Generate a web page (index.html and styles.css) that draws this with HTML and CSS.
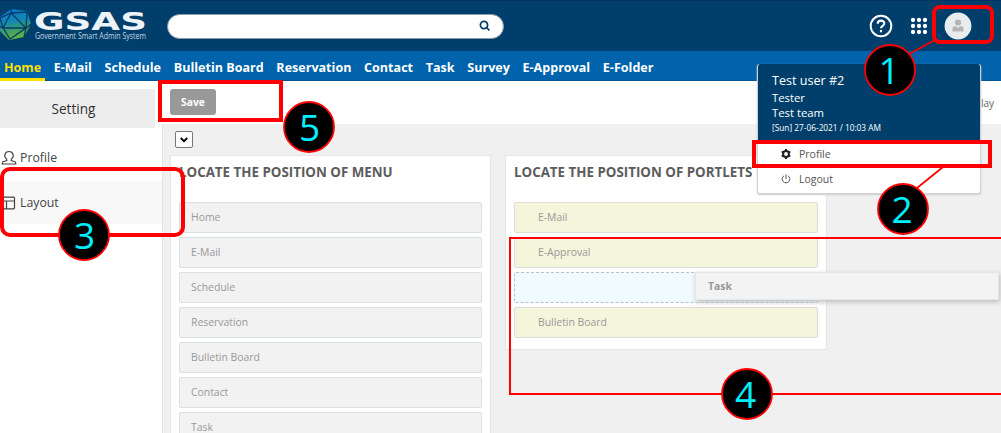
FILE: index.html
```html
<!DOCTYPE html>
<html lang="en">
<head>
<meta charset="utf-8">
<title>GSAS - Layout setting</title>
<link rel="stylesheet" href="styles.css">
</head>
<body>
<div class="app">
  <header class="topbar">
    <svg class="logo" width="150" height="50" viewBox="0 0 150 50">
      <defs>
        <linearGradient id="gem" x1="0.4" y1="0" x2="0.6" y2="1">
          <stop offset="0" stop-color="#0878d2"/><stop offset="0.4" stop-color="#1488b0"/><stop offset="0.65" stop-color="#3a9c6c"/><stop offset="1" stop-color="#6dbb35"/>
        </linearGradient>
      </defs>
      <path d="M11 8 27 10 31 23 24 36 9 39 -2 28 0 16Z" fill="url(#gem)"/>
      <path d="M11 12 26 27 3 27ZM11 12 27 11 26 27 31 23M11 12 0 17 3 27 10 38 26 27 24 36M3 27-2 25M11 12 11 8" fill="none" stroke="#063c65" stroke-width="1.3"/>
      <text class="logo-name" x="34" y="28.5" textLength="113" lengthAdjust="spacingAndGlyphs">GSAS</text>
      <text class="logo-sub" x="35" y="38" textLength="111" lengthAdjust="spacingAndGlyphs">Government Smart Admin System</text>
    </svg>
    <div class="search">
      <svg width="12" height="12" viewBox="0 0 12 12"><circle cx="5" cy="5" r="3.6"/><path d="M7.7 7.7 10.5 10.5"/></svg>
    </div>
    <div class="tools">
      <svg width="24" height="24" viewBox="0 0 24 24"><circle cx="12" cy="12" r="10.3" fill="none" stroke="#fff" stroke-width="2"/><path d="M8.7 9.7C8.9 5.5 15.4 5.8 15.3 9.5 15.2 11.8 12.1 11.8 12 14.2M12 15.9V18.2" fill="none" stroke="#fff" stroke-width="2.1"/></svg>
      <svg class="grid-icon" width="18" height="18" viewBox="0 0 18 18"><path d="M3 3h0M9 3h0M15 3h0M3 9h0M9 9h0M15 9h0M3 15h0M9 15h0M15 15h0" stroke="#fff" stroke-width="4.300" stroke-linecap="round"/></svg>
      <svg width="28" height="28" viewBox="0 0 28 28"><circle cx="14" cy="14" r="13.4" fill="#e9ecef"/><circle cx="14" cy="10.500" r="3.1" fill="#b5b5b5"/><path d="M8.5 19.5V16.5Q8.5 14 11.5 14L14 16 16.5 14Q19.5 14 19.5 16.5V19.5Z" fill="#b5b5b5"/></svg>
    </div>
  </header>
  <nav class="nav">
    <a class="active">Home</a><a>E-Mail</a><a>Schedule</a><a>Bulletin Board</a><a>Reservation</a><a>Contact</a><a>Task</a><a>Survey</a><a>E-Approval</a><a>E-Folder</a>
  </nav>
  <div class="body">
    <aside class="sidebar">
      <h2>Setting</h2>
      <a class="side-item">
        <svg width="16" height="16" viewBox="0 0 16 16"><path d="M5.8 9.2C2.2 7 3.6 1.5 8 1.5S13.8 7 10.2 9.2M5.8 9.2V10.5L2 11.7Q1.2 12.2 1.2 14H14.8Q14.8 12.2 14 11.7L10.2 10.5V9.2"/></svg>
        <span>Profile</span></a>
      <a class="side-item current">
        <svg width="16" height="16" viewBox="0 0 16 16"><path d="M-1 2.200H12.500Q13.500 2.200 13.500 3.200V12.800Q13.500 13.800 12.500 13.800H-1M0 6H13.5M5.5 6V13.8"/></svg>
        <span>Layout</span></a>
    </aside>
    <main class="main">
      <div class="toolbar"><button class="save">Save</button><span class="display">Display</span></div>
      <div class="workspace">
        <div class="select"><svg width="8" height="6" viewBox="0 0 8 6"><path d="M.8 1 4 4.2 7.2 1"/></svg></div>
        <div class="panels">
          <section class="panel menu-panel">
            <h3>LOCATE THE POSITION OF MENU</h3>
            <div class="list">
              <div class="item">Home</div><div class="item">E-Mail</div><div class="item">Schedule</div><div class="item">Reservation</div><div class="item">Bulletin Board</div><div class="item">Contact</div><div class="item">Task</div>
            </div>
          </section>
          <section class="panel portlets">
            <h3>LOCATE THE POSITION OF PORTLETS</h3>
            <div class="list">
              <div class="item">E-Mail</div><div class="item">E-Approval</div><div class="item drop"></div><div class="item">Bulletin Board</div>
            </div>
          </section>
        </div>
      </div>
    </main>
  </div>
  <div class="dragged">Task</div>
  <div class="popup">
    <div class="user"><p class="user-name">Test user #2</p><p>Tester</p><p>Test team</p><p class="time">[Sun] 27-06-2021 / 10:03 AM</p></div>
    <a class="pop-item">
      <svg width="10" height="10" viewBox="0 0 10 10"><circle cx="5" cy="5" r="2.9" fill="none" stroke="#222" stroke-width="2"/><path d="M5 0V2M5 8v2M.7 2.5l1.7 1M7.6 6.5l1.7 1M.7 7.5l1.7-1M7.6 3.5l1.7-1" stroke="#222" stroke-width="2"/></svg>
      <span>Profile</span></a>
    <a class="pop-item">
      <svg width="10" height="10" viewBox="0 0 10 10"><path d="M3 1.8A3.8 3.8 0 1 0 7 1.8M5 .5V5" fill="none" stroke="#555" stroke-width="1"/></svg>
      <span>Logout</span></a>
  </div>
  <svg class="callouts" width="1001" height="433" viewBox="0 0 1001 433">
    <g fill="none" stroke="#f00" stroke-width="4">
      <rect x="934" y="7" width="58" height="35" rx="6"/>
      <rect x="754" y="142" width="236" height="24"/>
      <rect x="2" y="169" width="181" height="66" rx="8"/>
      <rect x="160" y="82" width="121" height="38"/>
      <path d="M1003 238H510V394H1003" stroke-width="2"/>
      <path d="M909 54 935 40M917 188 943 167" stroke-width="1.7"/>
    </g>
    <g fill="#000" stroke="#f00" stroke-width="1.8">
      <circle cx="890" cy="70" r="25"/><circle cx="903" cy="209" r="25"/><circle cx="84" cy="235" r="25"/><circle cx="747" cy="394" r="25"/><circle cx="309" cy="127" r="25"/>
    </g>
    <g class="numbers">
      <text x="889" y="83.5">1</text><text x="902" y="222.5">2</text><text x="84.500" y="249">3</text><text x="745.500" y="407.5">4</text><text x="309.500" y="140.5">5</text>
    </g>
  </svg>
</div>
</body>
</html>
```
FILE: styles.css
```css
* { box-sizing: border-box; }
body { margin: 0; font-family: "Open Sans", "Noto Sans", sans-serif; color: #444; }
h2, h3, p { margin: 0; }
.app { position: relative; width: 1001px; height: 433px; overflow: hidden; background: #fff; }
.topbar { display: flex; align-items: center; height: 51px; background: #003f6b; border-top: 1px solid #00335f; }
.logo { flex: none; width: 150px; overflow: visible; }
.logo-name { font: bold 24.5px "DejaVu Sans", sans-serif; fill: #edf3f8; }
.logo-sub { font: 8.5px "Open Sans", sans-serif; fill: #c5d6e2; }
.search { display: flex; align-items: center; justify-content: flex-end; width: 337px; height: 25px; margin-left: 17px; padding-right: 12px; border-radius: 13px; border: 1px solid #8999a5; background: #fff; }
.search svg { fill: none; stroke: #003f6b; stroke-width: 1.7; }
.tools { display: flex; align-items: center; margin-left: auto; margin-right: 29px; }
.grid-icon { margin: 0 16px 0 17px; }
.nav { display: flex; height: 30px; background: #0063ab; border-bottom: 1px solid #005596; }
.nav a { padding: 0 6.350px; height: 30px; line-height: 33px; font-size: 12.550px; font-weight: 700; color: #fff; white-space: nowrap; }
.nav .active { padding-left: 4px; padding-right: 4px; margin-right: 2.300px; color: #ffe000; border-bottom: 3px solid #ffe000; }
.body { display: flex; height: 352px; }
.sidebar { width: 162px; flex: none; padding-top: 8px; }
.sidebar h2 { width: 155px; height: 39px; margin-bottom: 8px; padding-right: 8px; line-height: 39px; text-align: center; background: #ededed; font-size: 13.600px; font-weight: 400; color: #333; }
.side-item { display: flex; align-items: center; height: 43px; margin-bottom: 2px; padding-left: 1px; gap: 3px; font-size: 12.300px; color: #444; }
.side-item svg { fill: none; stroke: #444; stroke-width: 1.2; }
.side-item.current { background: #f8f8f8; }
.main { flex: 1; display: flex; flex-direction: column; min-width: 0; }
.toolbar { display: flex; flex: none; align-items: center; justify-content: space-between; height: 43px; padding: 0 7px 0 8px; }
.save { width: 46px; height: 26px; margin-top: -1px; padding: 0; border: 0; border-radius: 3px; background: #999; color: #fff; font: 700 10.300px "Open Sans", sans-serif; }
.display { font-size: 10px; color: #666; }
.workspace { flex: 1; padding: 7px 0 0 8px; background: #f0f0f0; border-left: 1px solid #e3e3e3; }
.select { display: flex; align-items: center; justify-content: center; width: 18px; height: 17px; margin-left: 4px; border: 1px solid #777; border-radius: 2px; background: #fff; }
.select svg { fill: none; stroke: #000; stroke-width: 1.8; }
.panels { display: flex; align-items: flex-start; gap: 14px; margin-top: 7px; margin-left: -1px; }
.panel { width: 321px; height: 195px; padding: 0 8px; background: #fff; border: 1px solid #e5e5e5; }
.menu-panel { height: 320px; }
.portlets { width: 322px; }
.panel h3 { height: 46px; padding-top: 7px; font-size: 13.350px; line-height: 18px; font-weight: 700; color: #5c5c5c; white-space: nowrap; }
.list { display: flex; flex-direction: column; gap: 4px; }
.item { height: 31px; padding-left: 11px; line-height: 29px; font-size: 10.400px; color: #999; background: #f2f2f2; border: 1px solid #dadfe0; border-radius: 2px; }
.portlets .item { padding-left: 23px; background: #f5f5dc; border-color: #dcddda; }
.portlets .drop { background: #f0fbff; border: 1px dashed #b5c2ca; }
.dragged { position: absolute; left: 695px; top: 272px; width: 304px; height: 28px; padding-left: 12px; line-height: 27px; background: #f3f3f3; border: 1px solid #e6e6e6; box-shadow: 1px 2px 5px #bbb; font-size: 10.400px; font-weight: 700; color: #999; }
.popup { position: absolute; left: 757px; top: 64px; width: 224px; height: 130px; background: #fff; border: 1px solid #d2d2d2; border-top: 0; border-radius: 3px; box-shadow: 0 1px 2px #ccc; overflow: hidden; }
.user { height: 77px; margin: 0 -1px; padding: 8px 0 0 15px; background: #003f6b; color: #fff; font-size: 11.300px; line-height: 15px; font-weight: 500; }
.user .user-name { font-size: 12.600px; line-height: 18px; }
.user .time { font-size: 8.300px; font-weight: 500; }
.pop-item { display: flex; align-items: center; height: 25px; padding-left: 23px; gap: 8px; font-size: 10.500px; color: #555; }
.callouts { position: absolute; left: 0; top: 0; }
.numbers { font: 37px "Open Sans", sans-serif; fill: #00efff; text-anchor: middle; }
```
